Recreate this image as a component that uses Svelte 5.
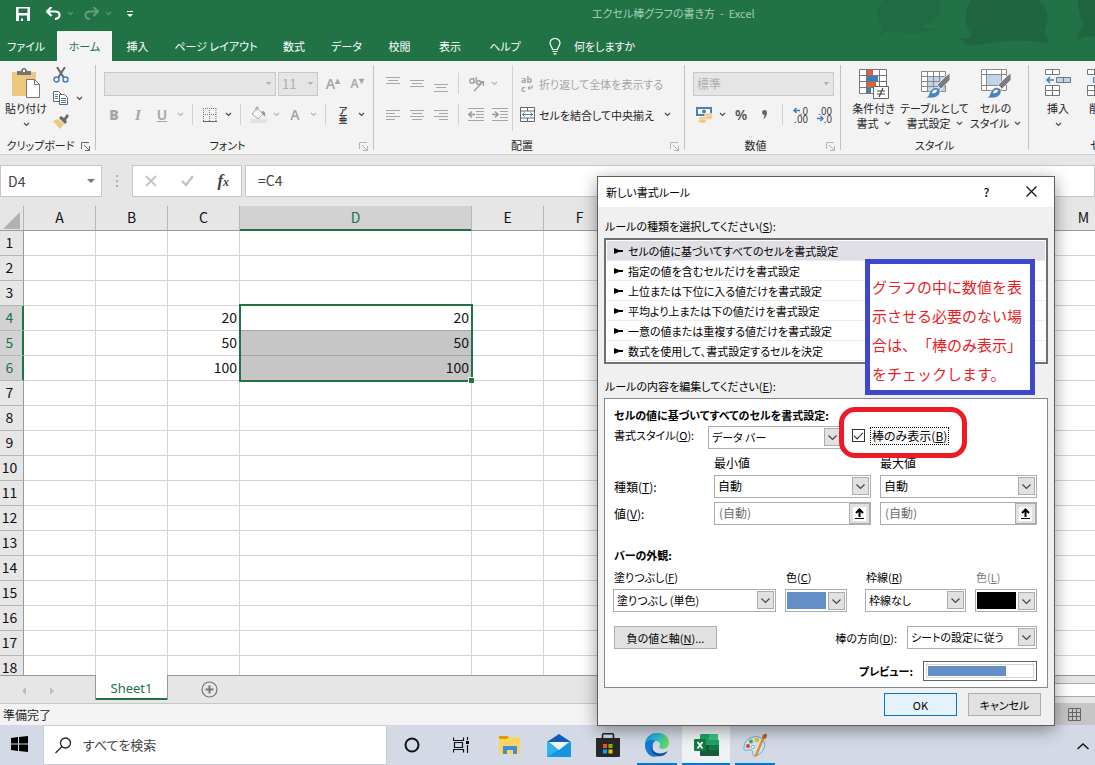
<script lang="ts">
	const tabs = ['ファイル', 'ホーム', '挿入', 'ページ レイアウト', '数式', 'データ', '校閲', '表示', 'ヘルプ'];
	const columns = ['A', 'B', 'C', 'D', 'E', 'F', 'G', 'H', 'I', 'J', 'K', 'L', 'M'];
	const rows = Array.from({ length: 18 }, (_, i) => i + 1);
	const values: Record<number, number> = { 4: 20, 5: 50, 6: 100 };
	const rules = [
		'セルの値に基づいてすべてのセルを書式設定',
		'指定の値を含むセルだけを書式設定',
		'上位または下位に入る値だけを書式設定',
		'平均より上または下の値だけを書式設定',
		'一意の値または重複する値だけを書式設定',
		'数式を使用して、書式設定するセルを決定'
	];

	let selectedRule = $state(0);
	let barOnly = $state(true);

	function cellValue(col: string, row: number) {
		return col === 'C' || col === 'D' ? (values[row] ?? '') : '';
	}
</script>

{#snippet chev()}
	<svg class="chev" width="7" height="5" viewBox="0 0 7 5"><path d="M1 1l2.5 2.5L6 1" /></svg>
{/snippet}

{#snippet drop()}
	<svg class="drop" width="17" height="18" viewBox="0 0 17 18">
		<rect x=".5" y=".5" width="16" height="17" fill="#e1e1e1" stroke="#adadad" />
		<path d="M4.500 7.500l4 4 4-4" fill="none" stroke="#444" stroke-width="1.200" />
	</svg>
{/snippet}

{#snippet lines(spec: number[][])}
	<svg width="16" height="16" viewBox="0 0 16 16" stroke="#a6a6a6">
		{#each spec as [x1, x2, y]}
			<path d="M{x1} {y}.5H{x2}" />
		{/each}
	</svg>
{/snippet}

{#snippet launcher(dim: boolean)}
	<button class="launcher" class:dim aria-label="詳細">
		<svg width="9" height="9" viewBox="0 0 9 9"><path d="M.5 7V.5H8M3 3l5 5M8.500 4v4.500H4" /></svg>
	</button>
{/snippet}

{#snippet brush()}
	<path d="M30 5v7l-9 9-4-4 9-9z" fill="#7d7d7d" stroke="#f3f3f3" stroke-width=".8" />
	<path d="M5 30c5-1 3-6 7-9 3-3 7-1 8 1 1 5-4 8-8 8z" fill="#4a83bd" stroke="#f3f3f3" stroke-width=".8" />
	<path d="M12 25c0-3 3-4 5-3 0 2-2 4-5 3z" fill="#fff" />
{/snippet}

<div class="app">
	<header class="titlebar">
		<div class="quick">
			<button aria-label="上書き保存">
				<svg width="14" height="14" viewBox="0 0 14 14"><path d="M0 0h14v14H0zM2.500 1.500v4.500h9V1.500zM3 8.500V14h2v-2.500h2V14h4V8.500z" fill="#fff" fill-rule="evenodd" /></svg>
			</button>
			<button aria-label="元に戻す">
				<svg width="15" height="13" viewBox="0 0 15 13"><path d="M5.500 0L1 4.500 5.500 9M1.500 4.500H9c6 0 6 7 0 7.500" fill="none" stroke="#fff" stroke-width="2.200" /></svg>
			</button>
			<span class="faint">{@render chev()}</span>
			<button class="faint" aria-label="やり直し">
				<svg width="15" height="13" viewBox="0 0 15 13"><path d="M9.500 0L14 4.500 9.500 9M13.500 4.500H6c-6 0-6 7 0 7.500" fill="none" stroke="#fff" stroke-width="2" /></svg>
			</button>
			<span class="faint">{@render chev()}</span>
			<button class="custom" aria-label="ツール バーのカスタマイズ">
				<svg width="6" height="6" viewBox="0 0 6 6"><path d="M0 0h6v1H0zM0 3h6L3 6z" fill="#fff" /></svg>
			</button>
		</div>
		<h1>エクセル棒グラフの書き方 &nbsp;-&nbsp; Excel</h1>
		<svg class="art" width="230" height="61" viewBox="0 0 230 61">
			<g fill="#1f6540">
				<path d="M18 0c-8 12-8 20-1 26-2 5-1 8-3 10 8-5 14-6 23-4 13 3 25 1 35-4-7 1-13 0-16-2 17-5 25-14 18-26z" opacity=".6" />
				<path d="M109 0c-7 10-7 22-1 32 2 3 1 4 0 5-4 2-7 2-10 0 2 7 7 9 17 8 27-4 44-7 72-1l-2-8c-3-3-2-7 0-12 2-8 0-17-8-24z" transform="translate(-3 0)" />
				<path d="M213 0c0 12 2 17 6 24-5 6-6 10-7 17 5-4 12-6 18-4V0z" />
			</g>
		</svg>
	</header>

	<nav class="tabs">
		{#each tabs as tab, i (tab)}
			<button class:active={i === 1}>{tab}</button>
		{/each}
		<button class="tell">
			<svg width="12" height="17" viewBox="0 0 12 17" fill="none" stroke="#fff" stroke-width="1.200">
				<path d="M3.500 11.500C3.500 9 1 8 1 5a5 4.500 0 0 1 10 0c0 3-2.500 4-2.500 6.500zM3.500 13.500h5M4.500 15.800h3" />
			</svg>
			何をしますか
		</button>
	</nav>

	<section class="ribbon">
		<div class="group clipboard">
			<div class="body">
				<button class="big">
					<svg width="30" height="31" viewBox="0 0 30 31">
						<path d="M1 4h24v24H1z" fill="#edc87e" />
						<path d="M6 7V3h4c0-4 6-4 6 0h4v4z" fill="#737373" /><circle cx="13" cy="3" r="1.200" fill="#fff" />
						<path d="M15.500 11.500h8l5 5v13h-13z" fill="#fff" stroke="#777" /><path d="M23.500 11.500v5h5" fill="none" stroke="#777" />
					</svg>
					<span>貼り付け</span>
					{@render chev()}
				</button>
				<div class="mini">
					<button aria-label="切り取り">
						<svg width="16" height="16" viewBox="0 0 16 16"><path d="M4 0l7 11M12 0L5 11" stroke="#666" stroke-width="2" /><circle cx="3.500" cy="12.500" r="2.500" fill="none" stroke="#3f7ebd" stroke-width="1.400" /><circle cx="12.500" cy="12.500" r="2.500" fill="none" stroke="#3f7ebd" stroke-width="1.400" /></svg>
					</button>
					<button aria-label="コピー">
						<svg width="16" height="16" viewBox="0 0 16 16"><g fill="#fff" stroke="#666"><path d="M.5 1.500h5l3 3v7h-8z" /><path d="M6.500 4.500h5l3 3v7h-8z" /></g><path d="M2 4.500h3M2 6.500h3M2 8.500h3M8 8.500h5M8 10.500h5M8 12.500h5" stroke="#3f7ebd" /></svg>
						{@render chev()}
					</button>
					<button aria-label="書式のコピー/貼り付け">
						<svg width="16" height="16" viewBox="0 0 16 16"><path d="M0 8l5-2 6 5-4 5z" fill="#edc87e" /><path d="M6 5l2-2 3 2 3-4 2 2-3 4 1 2-2 2z" fill="#6b6b6b" /></svg>
					</button>
				</div>
			</div>
			<div class="caption"><span>クリップボード</span>{@render launcher(false)}</div>
		</div>

		<div class="group font">
			<div class="body rows2">
				<div class="line">
					<select class="pick name" disabled aria-label="フォント"><option></option></select>
					<select class="pick size" disabled aria-label="フォント サイズ"><option>11</option></select>
					<button class="letter off" aria-label="フォント サイズの拡大">A<sup>▴</sup></button>
					<button class="letter small off" aria-label="フォント サイズの縮小">A<sup>▾</sup></button>
				</div>
				<div class="line">
					<button class="letter off"><b>B</b></button>
					<button class="letter off"><i>I</i></button>
					<button class="letter off"><u>U</u></button>
					<span class="arrow off">{@render chev()}</span>
					<i class="sep"></i>
					<button aria-label="罫線">
						<svg width="14" height="14" viewBox="0 0 14 14"><path d="M0 .5h14M0 6.500h14M.5 0v13M6.500 0v13M13 0v13" stroke="#777" stroke-dasharray="1 1" /><path d="M0 13.500h14" stroke="#666" /></svg>
					</button>
					<span class="arrow">{@render chev()}</span>
					<i class="sep"></i>
					<button aria-label="塗りつぶしの色">
						<svg width="17" height="17" viewBox="0 0 17 17"><path d="M7 2l6 6-5 5-6-5zM6 5V1h2v3" fill="#f7f7f7" stroke="#aaa" /><path d="M12 5c3 0 4 3 3 6-1-2-2-2-3-3z" fill="#999" /><path d="M0 13h17v4H0z" fill="#e6dfe4" /></svg>
					</button>
					<span class="arrow off">{@render chev()}</span>
					<button class="letter off">A</button>
					<span class="arrow off">{@render chev()}</span>
					<i class="sep"></i>
					<button class="ruby"><span>ア</span><span>亜</span></button>
					<span class="arrow">{@render chev()}</span>
				</div>
			</div>
			<div class="caption"><span>フォント</span>{@render launcher(true)}</div>
		</div>

		<div class="group align">
			<div class="body">
				<div class="rows2">
					<div class="line">
						<button aria-label="上揃え">{@render lines([[1, 15, 1], [3, 13, 4], [1, 15, 7]])}</button>
						<button aria-label="上下中央揃え">{@render lines([[1, 15, 4], [3, 13, 7], [1, 15, 10]])}</button>
						<button aria-label="下揃え">{@render lines([[1, 15, 8], [3, 13, 11], [1, 15, 15]])}</button>
						<i class="sep"></i>
						<button aria-label="方向">
							<svg width="17" height="16" viewBox="0 0 17 16" fill="none" stroke="#a6a6a6" stroke-width="1.500">
								<circle cx="4" cy="5" r="2.200" /><path d="M5 2l2 5M8 1l1 7" /><circle cx="10.500" cy="6.500" r="2" />
								<path d="M6 15L15 6M11 5.500h4.500V10" stroke="#999" stroke-width="1.200" />
							</svg>
						</button>
						<span class="arrow off">{@render chev()}</span>
					</div>
					<div class="line">
						<button aria-label="左揃え">{@render lines([[1, 15, 3], [1, 10, 6], [1, 15, 9], [1, 10, 12]])}</button>
						<button aria-label="中央揃え">{@render lines([[1, 15, 3], [3, 13, 6], [1, 15, 9], [3, 13, 12]])}</button>
						<button aria-label="右揃え">{@render lines([[1, 15, 3], [6, 15, 6], [1, 15, 9], [6, 15, 12]])}</button>
						<i class="sep"></i>
						<button aria-label="インデントを減らす">
							<svg width="16" height="14" viewBox="0 0 16 14"><path d="M0 .5h16M8 3.500h8M8 6.500h8M8 9.500h8M0 12.500h16" stroke="#a6a6a6" /><path d="M7 6.500H1M4 3.500l-3 3 3 3" fill="none" stroke="#999" stroke-width="1.600" /></svg>
						</button>
						<button aria-label="インデントを増やす">
							<svg width="16" height="14" viewBox="0 0 16 14"><path d="M0 .5h16M8 3.500h8M8 6.500h8M8 9.500h8M0 12.500h16" stroke="#a6a6a6" /><path d="M0 6.500h6M3 3.500l3 3-3 3" fill="none" stroke="#999" stroke-width="1.600" /></svg>
						</button>
					</div>
				</div>
				<div class="rows2 wraps">
					<button class="command off">
						<span class="abc"><span>ab</span><span>c<svg width="6" height="6" viewBox="0 0 6 6"><path d="M5 0v3H1M3 1L1 3l2 2" fill="none" stroke="#999" /></svg></span></span>
						折り返して全体を表示する
					</button>
					<button class="command">
						<svg width="15" height="15" viewBox="0 0 15 15"><path d="M.5.5h14v14H.5zM.5 4h14M.5 11h14M7.500.5V4M7.500 11v3.500" fill="#fff" stroke="#666" /><path d="M2 7.500h11M4.500 5.500l-2 2 2 2M10.500 5.500l2 2-2 2" fill="none" stroke="#3f7ebd" /></svg>
						<span>セルを結合して中央揃え</span>
						{@render chev()}
					</button>
				</div>
			</div>
			<div class="caption"><span>配置</span>{@render launcher(true)}</div>
		</div>

		<div class="group number">
			<div class="body rows2">
				<div class="line">
					<select class="pick format" disabled aria-label="数値の書式"><option>標準</option></select>
				</div>
				<div class="line">
					<button aria-label="通貨表示形式">
						<svg width="17" height="16" viewBox="0 0 17 16"><path d="M0 0h16v9H0z" fill="#4a7fb5" /><path d="M2 2h12v5H2z" fill="#fff" /><circle cx="8" cy="4.500" r="2" fill="#4a7fb5" /><g fill="#edc87e" stroke="#f3f3f3" stroke-width=".6"><ellipse cx="12.500" cy="8" rx="4" ry="2" /><ellipse cx="12.500" cy="10.500" rx="4" ry="2" /><ellipse cx="6.500" cy="11.500" rx="4" ry="2" /><ellipse cx="6.500" cy="14" rx="4" ry="2" /></g></svg>
					</button>
					<span class="arrow">{@render chev()}</span>
					<button class="letter dark">%</button>
					<button class="comma" aria-label="桁区切りスタイル">
						<svg width="6" height="9" viewBox="0 0 6 9"><path d="M0 2.500a2.500 2.500 0 0 1 5 0C5 5 4 8 1 9c1-2 1.500-3 1.500-4A2.500 2.500 0 0 1 0 2.500z" fill="#666" /></svg>
					</button>
					<i class="sep"></i>
					<button class="dec"><span><svg width="7" height="7" viewBox="0 0 7 7"><path d="M7 3.500H1M3.500 1L1 3.500 3.500 6" /></svg>.0</span><span>.00</span></button>
					<button class="dec"><span>.00</span><span><svg width="7" height="7" viewBox="0 0 7 7"><path d="M0 3.500h6M3.500 1L6 3.500 3.500 6" /></svg>.0</span></button>
				</div>
			</div>
			<div class="caption"><span>数値</span>{@render launcher(true)}</div>
		</div>

		<div class="group styles">
			<div class="body">
				<button class="big">
					<svg width="30" height="31" viewBox="0 0 30 31">
						<path d="M.5 1.500h27v24H.5z" fill="#fff" />
						<path d="M.5 1.500h27v24H.5zM7.500 1v24M20.500 1v24M.5 7.500h27M.5 13.500h27M.5 19.500h27" fill="none" stroke="#777" />
						<path d="M8 2h6v5H8zM8 14h9v5H8z" fill="#dc6141" /><path d="M8 8h11v5H8zM8 20h4v5H8z" fill="#3f7ebd" />
						<path d="M14.500 18.500h15v12h-15z" fill="#fff" stroke="#666" /><path d="M18 23h8M18 26h8M24 20l-4 9" stroke="#444" stroke-width="1.200" />
					</svg>
					<span>条件付き</span>
					<span>書式 {@render chev()}</span>
				</button>
				<button class="big">
					<svg width="30" height="31" viewBox="0 0 30 31">
						<path d="M1.500 3.500h24v20h-24z" fill="#fff" /><path d="M8 9h18v15H8z" fill="#c0d5ea" />
						<path d="M1.500 3.500h24v20h-24zM7.500 3v20M13.500 3v20M19.500 3v20M1 8.500h24M1 13.500h24M1 18.500h24" fill="none" stroke="#888" />
						{@render brush()}
					</svg>
					<span>テーブルとして</span>
					<span>書式設定 {@render chev()}</span>
				</button>
				<button class="big">
					<svg width="30" height="31" viewBox="0 0 30 31">
						<path d="M.5 1.500h25v21H.5z" fill="#fff" /><path d="M6 7h14v10H6z" fill="#c0d5ea" />
						<path d="M.5 1.500h25v21H.5zM5.500 1v21M20.500 1v21M0 6.500h25M0 17.500h25" fill="none" stroke="#888" />
						{@render brush()}
					</svg>
					<span>セルの</span>
					<span>スタイル {@render chev()}</span>
				</button>
			</div>
			<div class="caption"><span>スタイル</span></div>
		</div>

		<div class="group cells">
			<div class="body">
				{#each ['挿入', '削除'] as label, i (label)}
					<button class="big">
						<svg width="27" height="31" viewBox="0 0 27 31">
							<path d="M.5 1.500h14v5H.5zM7.500 1.500v5M.5 17.500h14v10H.5zM7.500 17.500v10M.5 22.500h14" fill="#fff" stroke="#777" />
							<path d={i ? 'M6.500 9.500h14v5h-14z' : 'M11.500 9.500h14v5h-14zM18.500 9.500v5'} fill="#c0d5ea" stroke="#777" />
							{#if i === 0}<path d="M9 12H2M5 9l-3 3 3 3" fill="none" stroke="#3f7ebd" stroke-width="1.600" />{/if}
						</svg>
						<span>{label}</span>
						{@render chev()}
					</button>
				{/each}
			</div>
			<div class="caption"><span>セル</span></div>
		</div>
	</section>

	<section class="formula">
		<div class="namebox">
			<input value="D4" aria-label="名前ボックス" />
			<svg width="8" height="4" viewBox="0 0 8 4"><path d="M0 0h8L4 4z" fill="#777" /></svg>
		</div>
		<svg class="grip" width="2" height="12" viewBox="0 0 2 12"><path d="M0 0h2v2H0zM0 5h2v2H0zM0 10h2v2H0z" fill="#b0b0b0" /></svg>
		<div class="actions">
			<button aria-label="キャンセル"><svg width="12" height="12" viewBox="0 0 12 12"><path d="M1 1l10 10M11 1L1 11" stroke="#c3c3c3" stroke-width="1.800" /></svg></button>
			<button aria-label="入力"><svg width="13" height="12" viewBox="0 0 13 12"><path d="M1 6l4 4 7-9" fill="none" stroke="#c3c3c3" stroke-width="2.400" /></svg></button>
			<button class="fx">f<sub>x</sub></button>
		</div>
		<input class="expr" value="=C4" aria-label="数式バー" />
	</section>

	<main class="sheet">
		<table>
			<thead>
				<tr>
					<th class="corner"><svg width="17" height="17" viewBox="0 0 17 17"><path d="M17 0v17H0z" fill="#b1b1b1" /></svg></th>
					{#each columns as col (col)}
						<th class:wide={col === 'D'} class:picked={col === 'D'}>{col}</th>
					{/each}
				</tr>
			</thead>
			<tbody>
				{#each rows as row (row)}
					<tr>
						<th class:picked={row in values}>{row}</th>
						{#each columns as col (col)}
							<td class:filled={col === 'D' && (row === 5 || row === 6)} class:anchor={col === 'D' && row === 4}>
								{cellValue(col, row)}
								{#if col === 'D' && row === 4}<div class="selection"></div>{/if}
							</td>
						{/each}
					</tr>
				{/each}
			</tbody>
		</table>
	</main>

	<section class="sheetbar">
		<button class="step" aria-label="前のシート"><svg width="4" height="8" viewBox="0 0 4 8"><path d="M4 0v8L0 4z" fill="#bcbcbc" /></svg></button>
		<button class="step" aria-label="次のシート"><svg width="4" height="8" viewBox="0 0 4 8"><path d="M0 0v8l4-4z" fill="#bcbcbc" /></svg></button>
		<button class="sheettab">Sheet1</button>
		<button class="add" aria-label="新しいシート">
			<svg width="17" height="17" viewBox="0 0 17 17"><circle cx="8.500" cy="8.500" r="7.500" fill="none" stroke="#777" stroke-width="1.200" /><path d="M4.500 8.500h8M8.500 4.500v8" stroke="#777" stroke-width="2" /></svg>
		</button>
		<div class="scroll"></div>
	</section>

	<footer class="status">
		<span>準備完了</span>
		<button aria-label="標準ビュー">
			<svg width="13" height="13" viewBox="0 0 13 13"><path d="M.5.5h12v12H.5zM4.500.5v12M8.500.5v12M.5 4.500h12M.5 8.500h12" fill="none" stroke="#666" /></svg>
		</button>
	</footer>

	<div class="taskbar">
		<button class="start" aria-label="スタート">
			<svg width="17" height="16" viewBox="0 0 17 16"><path d="M0 2l7-1v6.500H0zM8 1l9-1v7.500H8zM0 8.500h7V15l-7-1zM8 8.500h9V16l-9-1z" /></svg>
		</button>
		<label class="search">
			<svg width="17" height="17" viewBox="0 0 17 17" fill="none" stroke="#222" stroke-width="1.300"><circle cx="10.500" cy="6" r="5" /><path d="M7 9.500L.5 16" /></svg>
			<input placeholder="すべてを検索" aria-label="検索" />
		</label>
		<div class="pins">
			<button aria-label="Cortana"><svg width="16" height="16" viewBox="0 0 16 16"><circle cx="8" cy="8" r="6.500" fill="none" stroke="#111" stroke-width="2" /></svg></button>
			<button aria-label="タスク ビュー"><svg width="17" height="16" viewBox="0 0 17 16"><path d="M.5.500v3h10v-3M.5 15.500v-3h10v3M1.500 5.500h8v5h-8zM14.500 0v3M14.500 8v8" fill="none" stroke="#111" stroke-width="1.200" /><path d="M13 4h3v3h-3z" /></svg></button>
			<button aria-label="エクスプローラー"><svg width="22" height="19" viewBox="0 0 22 19"><path d="M0 0h9l1 2h-1v2H0z" fill="#dc9b0b" /><path d="M0 3h8l2-2h11v17H0z" fill="#fcd462" /><path d="M4 18v-8h14v8h-4v-4H8v4z" fill="#3e8fd8" /></svg></button>
			<button aria-label="メール"><svg width="24" height="23" viewBox="0 0 24 23"><path d="M0 8l12-8 12 8v4H0z" fill="#0b5fb4" /><path d="M0 8h24v15H0z" fill="#2fb3ee" /><path d="M0 23L24 8v15z" fill="#1696e0" /><path d="M2 8h20l-10 8z" fill="#f5f5f2" /></svg></button>
			<button aria-label="Microsoft Store"><svg width="24" height="24" viewBox="0 0 24 24"><path d="M6.500 6V2q0-1.200 1.200-1.200h8.600q1.200 0 1.200 1.200v4" fill="none" stroke="#222" stroke-width="1.600" /><path d="M0 5h24v18q0 1-1 1H1q-1 0-1-1z" fill="#282828" /><path d="M7 11h4v4H7z" fill="#f25022" /><path d="M12.500 11h4v4h-4z" fill="#7fba00" /><path d="M7 16.500h4v4H7z" fill="#00a4ef" /><path d="M12.500 16.500h4v4h-4z" fill="#ffb900" /></svg></button>
			<button class="running" aria-label="Microsoft Edge">
				<svg width="24" height="24" viewBox="0 0 24 24">
					<defs><linearGradient id="edge" x1="0" x2="1" y1=".3" y2=".5"><stop offset="0" stop-color="#1593dd" /><stop offset=".5" stop-color="#2dc2d3" /><stop offset="1" stop-color="#67dc55" /></linearGradient></defs>
					<path d="M0 12C0-4 24-4 24 10c0 7-9 7-10 4 2-2 1-6-3-6C6 7 2 8 0 12z" fill="url(#edge)" />
					<path d="M0 12c1-5 7-6 11-4-5 1-6 14 2 15C5 26 0 19 0 12z" fill="#1479d2" />
					<path d="M8 11c-3 9 7 12 15 7-3 5-8 6-11 5-6-2-7-8-4-12z" fill="#0c4fa3" />
				</svg>
			</button>
			<button class="running current" aria-label="Excel">
				<svg width="25" height="22" viewBox="0 0 25 22"><path d="M7 0h9v11H6V1z" fill="#21a366" /><path d="M15 0h9v6h-9z" fill="#33c481" /><path d="M15 6h10v5H15z" fill="#21a366" /><path d="M6 11h19v10q0 1-1 1H7q-1 0-1-1z" fill="#185c37" /><path d="M15 11h10v5H15z" fill="#107c41" /><rect y="5" width="12" height="12" rx="1" fill="#107c41" /><path d="M3.500 8l5 6.500M8.500 8l-5 6.500" stroke="#fff" stroke-width="1.800" /></svg>
			</button>
			<button class="running" aria-label="ペイント">
				<svg width="25" height="24" viewBox="0 0 25 24"><path d="M1 16C0 8 8 2 16 4c6 2 7 9 4 13-3 5-8 7-10 5-1-2 1-4-2-5-2-1-7 2-7-1z" fill="#cfe6f2" stroke="#6fa6c4" /><circle cx="5" cy="13" r="2" fill="#e33b2e" /><circle cx="8" cy="8.500" r="2" fill="#4fae3d" /><circle cx="14" cy="7" r="2.200" fill="#f2b91e" /><circle cx="10" cy="14" r="1.600" fill="#f4fafd" stroke="#89b4c9" /><path d="M20 3l2 1-8 19-3 1 2-5z" fill="#e38b33" /><path d="M19 4c1-4 5-4 5-2s-1 4-3 4z" fill="#a8653a" /></svg>
			</button>
		</div>
		<button class="tray" aria-label="隠れているインジケーター"><svg width="12" height="7" viewBox="0 0 12 7"><path d="M.5 6L6 1l5.500 5" fill="none" stroke="#111" stroke-width="1.400" /></svg></button>
	</div>

	<div class="dialog" role="dialog" aria-labelledby="dialog-title">
		<div class="head">
			<h2 id="dialog-title">新しい書式ルール</h2>
			<button>?</button>
			<button aria-label="閉じる"><svg width="11" height="11" viewBox="0 0 11 11"><path d="M.5.500l10 10M10.500.500l-10 10" stroke="#111" stroke-width="1.200" /></svg></button>
		</div>
		<div class="content">
			<p class="lead">ルールの種類を選択してください(<u>S</u>):</p>
			<ul class="rules">
				{#each rules as rule, i (rule)}
					<li><button class:chosen={i === selectedRule} onclick={() => (selectedRule = i)}>
						<svg width="9" height="6" viewBox="0 0 9 6"><path d="M0 0l5 2h4v2H5L0 6z" /></svg>{rule}
					</button></li>
				{/each}
			</ul>
			<p class="lead">ルールの内容を編集してください(<u>E</u>):</p>
			<div class="panel">
				<h3>セルの値に基づいてすべてのセルを書式設定:</h3>
				<div class="stylerow">
					<label for="style">書式スタイル(<u>O</u>):</label>
					<div class="combo"><select id="style"><option>データ バー</option></select>{@render drop()}</div>
					<label class="check"><input type="checkbox" bind:checked={barOnly} /><span>棒のみ表示(<u>B</u>)</span></label>
				</div>
				<div class="limits">
					<span></span><span class="top">最小値</span><span class="top">最大値</span>
					<label for="min-type">種類(<u>T</u>):</label>
					<div class="combo"><select id="min-type"><option>自動</option></select>{@render drop()}</div>
					<div class="combo"><select aria-label="最大値の種類"><option>自動</option></select>{@render drop()}</div>
					<label for="min-value">値(<u>V</u>):</label>
					{#each ['min-value', 'max-value'] as id (id)}
						<div class="ref">
							<input {id} value="(自動)" aria-label={id === 'max-value' ? '最大値' : '最小値'} disabled />
							<button aria-label="範囲を選択"><svg width="13" height="14" viewBox="0 0 13 14"><path d="M0 0h13v14H0z" fill="#fff" /><path d="M6.500 10V3M3 6l3.500-3.500L10 6" fill="none" stroke="#000" stroke-width="2" /><path d="M2 11.500h9" stroke="#000" /></svg></button>
						</div>
					{/each}
				</div>
				<h3>バーの外観:</h3>
				<div class="looks">
					<div><label for="fill">塗りつぶし(<u>F</u>)</label>
						<div class="combo"><select id="fill"><option>塗りつぶし (単色)</option></select>{@render drop()}</div></div>
					<div><label for="fill-color">色(<u>C</u>)</label>
						<button id="fill-color" class="swatch"><span></span>{@render drop()}</button></div>
					<div class="edge"><label for="border">枠線(<u>R</u>)</label>
						<div class="combo"><select id="border"><option>枠線なし</option></select>{@render drop()}</div></div>
					<div><label class="muted" for="border-color">色(<u>L</u>)</label>
						<button id="border-color" class="swatch black"><span></span>{@render drop()}</button></div>
				</div>
				<div class="direction">
					<button class="push">負の値と軸(<u>N</u>)...</button>
					<label for="direction">棒の方向(<u>D</u>):</label>
					<div class="combo"><select id="direction"><option>シートの設定に従う</option></select>{@render drop()}</div>
				</div>
				<div class="preview"><b>プレビュー:</b><div class="frame"><div class="track"><div class="bar"></div></div></div></div>
			</div>
			<div class="buttons">
				<button class="push ok">OK</button>
				<button class="push">キャンセル</button>
			</div>
		</div>
		<p class="note">グラフの中に数値を表示させる必要のない場合は、「棒のみ表示」をチェックします。</p>
		<div class="ring"></div>
	</div>
</div>

<style>
	:global(body) {
		margin: 0;
		overflow: hidden;
	}
	.app {
		position: relative;
		display: flex;
		flex-direction: column;
		height: 100vh;
		overflow: hidden;
		background: #e6e6e6;
		color: #262626;
		font-family: 'Noto Sans CJK JP', sans-serif;
		font-size: 11px;
		line-height: 16px;
		font-feature-settings: 'palt';
	}
	.app * {
		box-sizing: border-box;
	}
	button,
	input,
	select {
		margin: 0;
		padding: 0;
		border: 0;
		border-radius: 0;
		background: none;
		color: inherit;
		font: inherit;
		font-feature-settings: inherit;
		outline: none;
		appearance: none;
	}
	h1,
	h2,
	h3,
	p,
	ul {
		margin: 0;
		padding: 0;
		font-size: inherit;
		font-weight: 400;
	}
	svg {
		flex: none;
	}
	.chev {
		fill: none;
		stroke: currentColor;
		stroke-width: 1.2;
		opacity: 0.8;
	}

	.titlebar {
		position: relative;
		flex: none;
		display: grid;
		grid-template-columns: 592px 1fr;
		align-items: center;
		height: 31px;
		background: #217346;
		color: #a3cdb3;
	}
	.titlebar h1 {
		padding-bottom: 5px;
		white-space: nowrap;
		font-size: 11px;
	}
	.quick {
		display: flex;
		align-items: center;
		gap: 16px;
		padding: 0 0 4px 16px;
		color: #fff;
	}
	.quick button {
		display: flex;
	}
	.quick span {
		display: flex;
		margin: 0 -6px 0 -10px;
	}
	.quick .custom {
		margin-left: 5px;
	}
	.faint {
		opacity: 0.3;
	}
	.art {
		position: absolute;
		right: 0;
		top: 0;
		z-index: 1;
		pointer-events: none;
	}
	.tabs {
		flex: none;
		display: grid;
		grid-template-columns: 57px 55px 51px 106px 50px 55px 51px 50px 60px 1fr;
		height: 30px;
		background: #217346;
		color: #fff;
	}
	.tabs button {
		white-space: nowrap;
	}
	.tabs button:first-child {
		text-align: left;
		padding-left: 7px;
	}
	.tabs .active {
		background: #f3f3f3;
		color: #217346;
	}
	.tabs .tell {
		display: flex;
		align-items: center;
		gap: 13px;
		padding-left: 14px;
	}

	.ribbon {
		flex: none;
		display: flex;
		height: 94px;
		padding-top: 4px;
		overflow: hidden;
		background: #f3f3f3;
		border-bottom: 1px solid #d2d0ce;
	}
	.group {
		flex: none;
		display: flex;
		flex-direction: column;
		height: 85px;
		border-right: 1px solid #c1c1c1;
	}
	.clipboard {
		width: 96px;
	}
	.font {
		width: 278px;
	}
	.align {
		width: 311px;
	}
	.number {
		width: 156px;
	}
	.styles {
		width: 188px;
	}
	.cells {
		width: 144px;
	}
	.body {
		flex: 1;
		display: flex;
	}
	.styles .body {
		display: grid;
		grid-template-columns: 62px 60px 62px;
		align-items: start;
		justify-content: center;
	}
	.cells .body {
		padding-left: 8px;
	}
	.cells .big {
		width: 42px;
	}
	.caption {
		display: flex;
		align-items: center;
		height: 16px;
		margin-bottom: -3px;
	}
	.caption span {
		flex: 1;
		text-align: center;
	}
	.launcher {
		display: flex;
		width: 14px;
		padding-top: 2px;
	}
	.launcher svg {
		fill: none;
		stroke: #666;
	}
	.launcher.dim svg {
		stroke: #b5b5b5;
	}
	.big {
		display: flex;
		flex-direction: column;
		align-items: center;
		padding-top: 3px;
		white-space: nowrap;
		line-height: 15px;
	}
	.big span {
		display: flex;
		align-items: center;
		gap: 5px;
	}
	.big span:first-of-type {
		padding-top: 2px;
	}
	.big > .chev {
		margin-top: 6px;
	}
	.clipboard .big {
		width: 52px;
	}
	.mini {
		display: flex;
		flex-direction: column;
		gap: 7px;
		padding-top: 2px;
		padding-left: 1px;
	}
	.mini button {
		display: flex;
		align-items: center;
		gap: 7px;
	}
	.rows2 {
		display: flex;
		flex-direction: column;
		gap: 6px;
		padding-top: 6px;
	}
	.line {
		display: flex;
		align-items: center;
		height: 25px;
	}
	.font .line {
		padding-left: 6px;
	}
	.align .line,
	.number .line {
		padding-left: 7px;
	}
	.line > button {
		display: flex;
		align-items: center;
		justify-content: center;
		width: 24px;
		height: 24px;
	}
	.arrow {
		display: flex;
		justify-content: center;
		width: 13px;
	}
	.line .off,
	.off {
		color: #a6a6a6;
	}
	.sep {
		align-self: stretch;
		width: 1px;
		margin: 2px 5px;
		background: #d2d2d2;
	}
	.pick {
		height: 24px;
		padding: 0 12px 0 3px;
		border: 1px solid #c8c8c8;
		background: #e5e5e5 conic-gradient(from -45deg at 50% 100%, #b5b5b5 90deg, transparent 0) no-repeat right 4px center / 6px 3px;
		color: #b0b0b0;
		opacity: 1;
		font-size: 13px;
		line-height: 22px;
	}
	.pick.format {
		width: 141px;
		margin-left: 1px;
		font-size: 12px;
	}
	.pick.name {
		width: 172px;
		margin: 0 2px;
	}
	.pick.size {
		width: 40px;
		margin-right: 3px;
	}
	.letter {
		font-family: 'Noto Sans', sans-serif;
		font-size: 14px;
		font-weight: 600;
	}
	.letter sup {
		font-size: 10px;
		line-height: 10px;
		padding-bottom: 8px;
	}
	.letter.small {
		font-size: 12px;
	}
	.letter i {
		font-family: 'Liberation Serif', serif;
		font-size: 15px;
	}
	.letter.dark {
		color: #555;
	}
	.ruby {
		flex-direction: column;
		font-size: 9px;
		font-weight: 500;
		line-height: 9px;
	}
	.wraps {
		margin-bottom: 6px;
		padding-left: 7px;
		border-left: 1px solid #d2d2d2;
	}
	.command {
		display: flex;
		align-items: center;
		gap: 4px;
		height: 25px;
		white-space: nowrap;
	}
	.command .chev {
		margin-left: 6px;
	}
	.abc {
		width: 15px;
		font: 700 9px 'Noto Sans', sans-serif;
	}
	.abc span {
		display: flex;
		align-items: center;
		gap: 1px;
		height: 9px;
		padding-left: 1px;
	}
	.line .dec {
		flex-direction: column;
		align-items: flex-end;
		padding-right: 4px;
		font-size: 10px;
		line-height: 8px;
		color: #444;
	}
	.dec span {
		display: flex;
		align-items: center;
	}
	.dec svg {
		fill: none;
		stroke: #3f7ebd;
		stroke-width: 1.5;
	}

	.formula {
		flex: none;
		display: flex;
		align-items: center;
		padding: 10px 0 9px;
		color: #444;
		font-size: 14px;
	}
	.namebox,
	.actions,
	.expr {
		display: flex;
		align-items: center;
		height: 32px;
		border: 1px solid #c6c6c6;
		background: #fff;
	}
	.namebox {
		width: 102px;
		padding: 0 6px 0 7px;
	}
	.namebox input {
		flex: 1;
		min-width: 0;
	}
	.grip {
		margin: 0 14px;
	}
	.actions {
		width: 110px;
		margin-right: 3px;
		justify-content: space-around;
	}
	.fx {
		font: italic 700 17px 'Liberation Serif', serif;
	}
	.fx sub {
		font-size: 12px;
		vertical-align: baseline;
	}
	.expr {
		flex: 1;
		min-width: 0;
		padding: 0 12px 2px;
	}

	.sheet {
		flex: 1;
		min-height: 0;
		overflow: hidden;
	}
	table {
		width: 1120px;
		table-layout: fixed;
		border-collapse: separate;
		border-spacing: 0;
		background: #fff;
		font-size: 14px;
		line-height: 20px;
		color: #111;
	}
	th,
	td {
		height: 25px;
		padding: 0 0 2px;
		border-right: 1px solid #d4d4d4;
		border-bottom: 1px solid #d4d4d4;
		white-space: nowrap;
	}
	td {
		padding-right: 2px;
		text-align: right;
	}
	th {
		width: 72px;
		background: #e6e6e6;
		font-weight: 400;
	}
	thead th {
		border-right-color: #b5b5b5;
		border-bottom-color: #999;
	}
	thead .wide {
		width: 232px;
	}
	thead .corner {
		width: 24px;
		text-align: right;
		line-height: 0;
		padding: 4px 3px 0 0;
		border-right-color: #b5b5b5;
	}
	tbody th {
		padding-right: 4px;
		border-right-color: #999;
		border-bottom-color: #b5b5b5;
	}
	thead .picked {
		background: #d2d2d2;
		color: #217346;
		box-shadow: inset 0 -1px #217346;
		border-bottom-color: #217346;
	}
	tbody .picked {
		background: #d2d2d2;
		color: #217346;
		box-shadow: inset -1px 0 #217346;
		border-right-color: #217346;
	}
	.filled {
		background: #c6c6c6;
		border-bottom-color: #a3a3a3;
	}
	.anchor {
		position: relative;
		border-bottom-color: #a3a3a3;
	}
	.selection {
		position: absolute;
		inset: -2px -2px -52px -1px;
		border: 2px solid #217346;
	}
	.selection::after {
		content: '';
		position: absolute;
		right: -3px;
		bottom: -3px;
		width: 5px;
		height: 5px;
		border: solid #fff;
		border-width: 1px 0 0 1px;
		background: #217346;
	}

	.sheetbar {
		flex: none;
		display: flex;
		align-items: stretch;
		height: 28px;
		border-top: 1px solid #999;
	}
	.step {
		width: 28px;
		padding-left: 10px;
	}
	.step:first-child {
		margin-left: 5px;
	}
	.sheettab {
		width: 73px;
		height: 25px;
		margin: -1px 0 0 34px;
		background: #fff;
		border: solid #999;
		border-width: 0 1px;
		box-shadow: inset 0 -2px #217346;
		color: #217346;
		font: 13px 'Noto Sans', sans-serif;
	}
	.add {
		display: flex;
		align-items: center;
		margin-left: 33px;
	}
	.scroll {
		flex: 1;
		margin: 7px 0 6px 380px;
		border: solid #ababab;
		border-width: 1px 0;
		background: #fff;
	}
	.status {
		flex: none;
		display: flex;
		align-items: center;
		justify-content: space-between;
		height: 22px;
		padding-left: 3px;
		background: #f3f3f3;
		border-top: 1px solid #c6c6c6;
		font-size: 12px;
	}
	.status button {
		display: flex;
		align-items: center;
		justify-content: center;
		width: 41px;
		height: 100%;
		background: #c6c6c6;
	}

	.taskbar {
		flex: none;
		display: flex;
		height: 40px;
		background: #d3dae6;
	}
	.start {
		width: 43px;
		padding-right: 5px;
	}
	.search {
		display: flex;
		align-items: center;
		gap: 11px;
		width: 344px;
		padding-left: 11px;
		border: 1px solid #c9cdd3;
		background: #fff;
		font-size: 13px;
	}
	.search input {
		flex: 1;
	}
	.search input::placeholder {
		color: #444;
		opacity: 1;
	}
	.pins {
		display: flex;
		gap: 1px;
		padding-left: 1px;
	}
	.pins button {
		display: flex;
		align-items: center;
		justify-content: center;
		width: 48px;
	}
	.running {
		position: relative;
	}
	.running::after {
		content: '';
		position: absolute;
		inset: auto 4px 0;
		height: 2px;
		background: #0078d7;
	}
	.current {
		background: #eef1f5;
	}
	.current::after {
		inset: auto 0 0;
	}
	.tray {
		margin-left: auto;
		padding-right: 6px;
	}

	.dialog {
		position: absolute;
		left: 597px;
		top: 176px;
		width: 458px;
		border: 1px solid #5e5e5e;
		background: #f0f0f0;
		color: #000;
		box-shadow: 0 4px 16px rgba(0, 0, 0, 0.4);
	}
	.head {
		display: flex;
		align-items: center;
		height: 30px;
		padding-left: 8px;
		background: #fff;
	}
	.head h2 {
		flex: 1;
	}
	.head button {
		width: 45px;
		font-weight: 500;
		font-size: 12px;
	}
	.content {
		padding: 11px 6px 9px;
	}
	.lead {
		height: 20px;
		padding-left: 1px;
	}
	.rules {
		margin-bottom: 14px;
		padding: 1px;
		border: 2px solid #6d7075;
		background: #fff;
		list-style: none;
	}
	.rules button {
		display: flex;
		align-items: center;
		gap: 5px;
		width: 100%;
		height: 20px;
		padding-left: 7px;
		border-bottom: 1px solid #ececec;
	}
	.rules .chosen {
		background: #e0dfe5;
	}
	.panel {
		height: 290px;
		padding: 8px 10px 0 9px;
		border: 1px solid #828790;
		background: #fff;
	}
	h3 {
		font-weight: 700;
	}
	.combo,
	.ref {
		position: relative;
		height: 23px;
		border: 1px solid #abadb3;
	}
	.combo select {
		width: 100%;
		height: 21px;
		padding: 0 20px 2px 3px;
	}
	.combo .drop {
		position: absolute;
		right: 1px;
		top: 1px;
		pointer-events: none;
	}
	.stylerow {
		display: grid;
		grid-template-columns: 94px 135px auto;
		align-items: center;
		height: 23px;
		margin-top: 3px;
	}
	.stylerow > label:first-child {
		padding-bottom: 6px;
	}
	.check {
		display: flex;
		align-items: center;
		gap: 6px;
		padding-left: 9px;
		padding-bottom: 4px;
		font-size: 12px;
	}
	.check input {
		width: 13px;
		height: 13px;
		border: 1px solid #333;
		background: #fff;
	}
	.check input:checked::before {
		content: '';
		display: block;
		width: 8px;
		height: 4px;
		margin: 2px 0 0 1px;
		border: solid #222;
		border-width: 0 0 1px 1px;
		transform: rotate(-45deg);
	}
	.check span {
		padding: 0 1px;
		outline: 1px dotted #000;
	}
	.limits {
		display: grid;
		grid-template-columns: 91px 157px 157px;
		gap: 4px 9px;
		align-items: center;
		margin: 6px 0 22px;
		font-size: 12px;
	}
	.limits .top {
		height: 16px;
	}
	.ref {
		display: flex;
		background: #fff;
	}
	.ref input {
		flex: 1;
		min-width: 0;
		padding: 0 0 1px 4px;
		color: #6d6d6d;
	}
	.ref button {
		display: flex;
		align-items: center;
		justify-content: center;
		width: 21px;
		border: 1px solid #abadb3;
		background: #e1e1e1;
	}
	.looks {
		display: grid;
		grid-template-columns: 163px 62px 110px 62px;
		column-gap: 9px;
		margin: 6px 0 14px -1px;
	}
	.looks .edge {
		padding-left: 9px;
	}
	.looks label {
		display: block;
		height: 20px;
		padding-left: 1px;
	}
	.muted {
		color: #777;
	}
	.swatch {
		display: flex;
		align-items: center;
		justify-content: space-between;
		width: 100%;
		height: 23px;
		padding: 0 1px;
		border: 1px solid #abadb3;
	}
	.swatch span {
		width: 39px;
		height: 17px;
		background: #638ec6;
	}
	.swatch.black span {
		background: #000;
	}
	.direction {
		display: grid;
		grid-template-columns: 103px 1fr 130px;
		align-items: center;
		column-gap: 10px;
	}
	.direction label {
		text-align: right;
	}
	.push {
		height: 23px;
		border: 1px solid #adadad;
		background: #e1e1e1;
		white-space: nowrap;
	}
	.preview {
		display: flex;
		align-items: center;
		justify-content: flex-end;
		gap: 10px;
		margin-top: 12px;
	}
	.frame {
		width: 114px;
		height: 20px;
		padding: 2px;
		border: 1px solid #646464;
	}
	.track {
		height: 14px;
		padding: 1px;
		border: 1px solid #d5d5d5;
	}
	.bar {
		width: 75%;
		height: 10px;
		background: #638ec6;
	}
	.buttons {
		display: flex;
		justify-content: flex-end;
		gap: 11px;
		padding: 5px 7px 0 0;
	}
	.buttons button {
		width: 73px;
	}
	.buttons .ok {
		border-color: #0078d7;
		background: #e5f1fb;
	}
	.note {
		position: absolute;
		left: 267px;
		top: 82px;
		width: 170px;
		height: 136px;
		padding: 8px 2px 0;
		border: 5px solid #3f48cc;
		background: #fff;
		color: #ed1c24;
		font-size: 15px;
		line-height: 29px;
		font-feature-settings: normal;
		text-spacing-trim: space-all;
		word-break: break-all;
	}
	.ring {
		position: absolute;
		left: 241px;
		top: 230px;
		width: 128px;
		height: 51px;
		border: 5px solid #ed1c24;
		border-radius: 16px;
		pointer-events: none;
	}
</style>
